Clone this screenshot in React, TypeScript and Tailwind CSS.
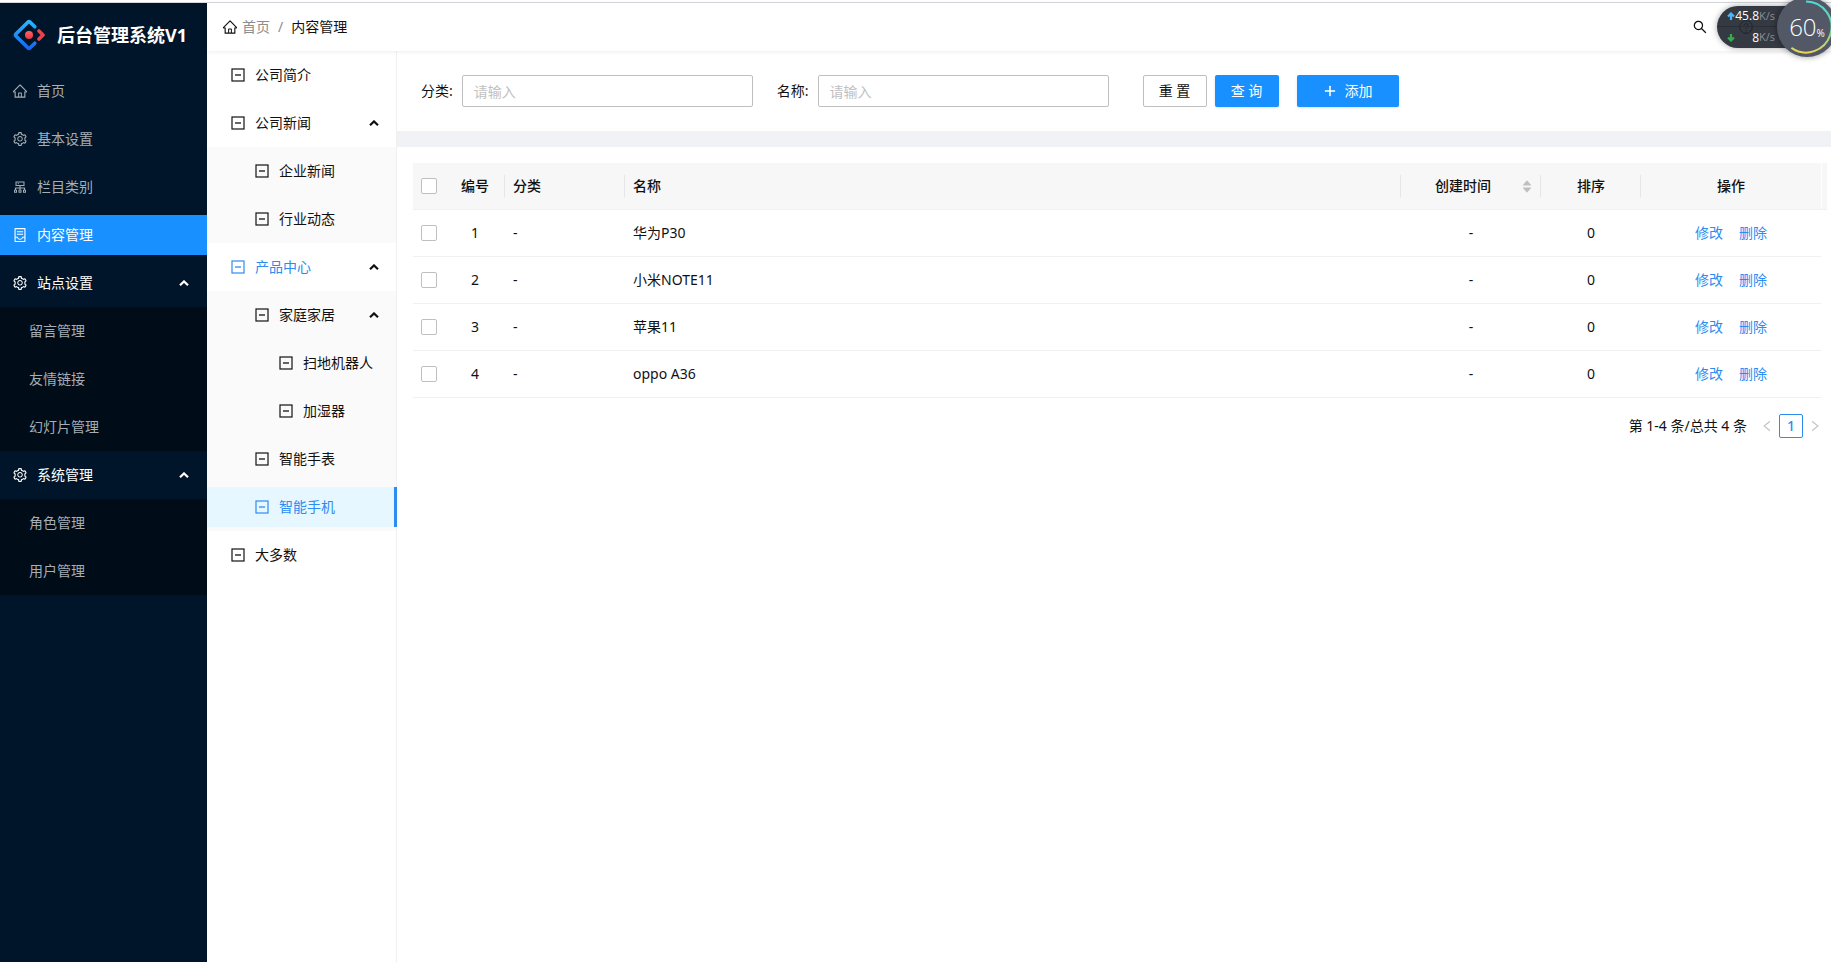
import React from 'react';
import {
  AiOutlineHome,
  AiOutlineSetting,
  AiOutlineCluster,
  AiOutlineContainer,
  AiOutlineSearch,
  AiOutlinePlus,
  AiOutlineLeft,
  AiOutlineRight,
  AiFillCaretUp,
  AiFillCaretDown,
} from 'react-icons/ai';

function Logo() {
  return (
    <svg viewBox="0 0 32 32" className="h-8 w-8 shrink-0" fill="none" aria-hidden="true">
      <defs>
        <linearGradient id="blue" x1="0" y1="0" x2="0" y2="1">
          <stop offset="0" stopColor="#29b6ff" />
          <stop offset="1" stopColor="#1468f0" />
        </linearGradient>
        <linearGradient id="red" x1="0" y1="0" x2="0" y2="1">
          <stop offset="0" stopColor="#fa6469" />
          <stop offset="1" stopColor="#f0323c" />
        </linearGradient>
      </defs>
      <path
        d="M21.8 7.8 L16.9 2.9 Q16 2 15.1 2.9 L2.9 15.1 Q2 16 2.9 16.9 L15.1 29.1 Q16 30 16.9 29.1 L21.8 24.2"
        stroke="url(#blue)"
        strokeWidth="3.6"
        strokeLinecap="round"
        strokeLinejoin="round"
      />
      <path d="M26 12 L30 16 L26 20" stroke="#e8434e" strokeWidth="3.6" strokeLinecap="round" strokeLinejoin="round" />
      <circle cx="16" cy="16" r="4" fill="url(#red)" />
    </svg>
  );
}

function MinusSquare() {
  return (
    <svg viewBox="0 0 14 14" className="h-[14px] w-[14px] shrink-0" fill="none" stroke="currentColor" aria-hidden="true">
      <rect x="1" y="1" width="12" height="12" strokeWidth="1.2" />
      <path d="M4 7H10" strokeWidth="1.3" />
    </svg>
  );
}

function Arrow() {
  return (
    <svg viewBox="0 0 10 6" className="h-[6px] w-[10px] shrink-0" fill="none" stroke="currentColor" strokeWidth="2.2" aria-hidden="true">
      <path d="M1 5.2 L5 1.4 L9 5.2" />
    </svg>
  );
}

type IconType = React.ComponentType<{ className?: string }>;

function SideItem({ icon: Icon, label, active }: { icon: IconType; label: string; active?: boolean }) {
  return (
    <a
      href="#"
      className={`my-1 flex h-10 items-center gap-[9px] pl-3 ${active ? 'bg-[#1890ff] text-white' : 'text-[#a6adb4]'}`}
    >
      <Icon className="h-4 w-4" />
      {label}
    </a>
  );
}

function SideGroup({ label, items }: { label: string; items: string[] }) {
  return (
    <div>
      <button className="flex h-12 w-full items-center gap-[9px] pr-[18px] pl-3 text-white">
        <AiOutlineSetting className="h-4 w-4" />
        <span className="flex-1 text-left">{label}</span>
        <Arrow />
      </button>
      <div className="bg-[#000c17]">
        {items.map((t) => (
          <a key={t} href="#" className="flex h-12 items-center pl-[29px] text-[#a6adb4]">
            {t}
          </a>
        ))}
      </div>
    </div>
  );
}

interface TreeNode {
  label: string;
  children?: TreeNode[];
  selected?: boolean;
  highlighted?: boolean;
}

const tree: TreeNode[] = [
  { label: '公司简介' },
  { label: '公司新闻', children: [{ label: '企业新闻' }, { label: '行业动态' }] },
  {
    label: '产品中心',
    highlighted: true,
    children: [
      { label: '家庭家居', children: [{ label: '扫地机器人' }, { label: '加湿器' }] },
      { label: '智能手表' },
      { label: '智能手机', selected: true },
    ],
  },
  { label: '大多数' },
];

const indents = ['pl-6', 'pl-12', 'pl-[72px]'];

function TreeList({ nodes, level }: { nodes: TreeNode[]; level: number }) {
  return (
    <ul className={`flex flex-col ${level > 0 ? 'bg-[#fafafa]' : ''}`}>
      {nodes.map((n) => (
        <li key={n.label} className="flex flex-col">
          <button
            className={`my-1 flex h-10 items-center gap-[10px] ${indents[level]} ${
              n.selected ? '-mr-px border-r-3 border-[#2d8cf0] bg-[#e6f7ff] pr-[14px]' : 'pr-[17px]'
            } ${n.selected || n.highlighted ? 'text-[#2d8cf0]' : ''}`}
          >
            <MinusSquare />
            <span className="flex-1 text-left whitespace-nowrap">{n.label}</span>
            {n.children && (
              <span className="text-[#111111]">
                <Arrow />
              </span>
            )}
          </button>
          {n.children && <TreeList nodes={n.children} level={level + 1} />}
        </li>
      ))}
    </ul>
  );
}

function Field({ id, label }: { id: string; label: string }) {
  return (
    <div className="flex items-center gap-[9px]">
      <label htmlFor={id} className="whitespace-nowrap">
        {label}:
      </label>
      <input
        id={id}
        placeholder="请输入"
        className="h-8 w-[291px] rounded-[2px] border border-[#bfbfbf] px-[11px] placeholder:text-[#bfbfbf]"
      />
    </div>
  );
}

function Check({ label }: { label: string }) {
  return (
    <input
      type="checkbox"
      aria-label={label}
      className="block h-4 w-4 appearance-none rounded-[2px] border border-[#bfbfbf] bg-white checked:bg-[#1890ff]"
    />
  );
}

function Divider() {
  return <span className="absolute top-3 right-0 h-[22px] w-px bg-[#e6e6e6]" />;
}

const rows = ['华为P30', '小米NOTE11', '苹果11', 'oppo A36'];

const headCell = 'relative border-b border-b-[#f0f0f0] font-medium';
const cell = 'border-b border-[#f0f0f0]';

function ContentTable() {
  return (
    <table className="w-full table-fixed border-separate border-spacing-0">
      <colgroup>
        <col className="w-8" />
        <col className="w-[60px]" />
        <col className="w-[120px]" />
        <col />
        <col className="w-[140px]" />
        <col className="w-[100px]" />
        <col className="w-[180px]" />
        <col className="w-[6px]" />
      </colgroup>
      <thead>
        <tr className="h-[47px] bg-[#f7f7f7]">
          <th className={`${headCell} pl-2`}>
            <Check label="全选" />
          </th>
          <th className={headCell}>
            编号
            <Divider />
          </th>
          <th className={`${headCell} px-2 text-left`}>
            分类
            <Divider />
          </th>
          <th className={`${headCell} px-2 text-left`}>
            名称
            <Divider />
          </th>
          <th className={`${headCell} px-2`}>
            <div className="flex items-center gap-1">
              <span className="flex-1">创建时间</span>
              <span className="flex flex-col text-[#bfbfbf]">
                <AiFillCaretUp className="h-3 w-3" />
                <AiFillCaretDown className="-mt-[5px] h-3 w-3" />
              </span>
            </div>
            <Divider />
          </th>
          <th className={headCell}>
            排序
            <Divider />
          </th>
          <th className={headCell}>操作</th>
          <th className={`${headCell} border-l border-l-[#fdfdfd]`} />
        </tr>
      </thead>
      <tbody>
        {rows.map((name, i) => (
          <tr key={name} className="h-[47px] text-center">
            <td className={`${cell} pl-2`}>
              <Check label={name} />
            </td>
            <td className={cell}>{i + 1}</td>
            <td className={`${cell} px-2 text-left`}>-</td>
            <td className={`${cell} px-2 text-left`}>{name}</td>
            <td className={cell}>-</td>
            <td className={cell}>0</td>
            <td className={cell}>
              <span className="flex justify-center gap-4 text-[#2d8cf0]">
                <a href="#">修改</a>
                <a href="#">删除</a>
              </span>
            </td>
            <td />
          </tr>
        ))}
      </tbody>
    </table>
  );
}

function Pagination() {
  return (
    <div className="mt-4 flex items-center justify-end">
      <span className="mr-2">第 1-4 条/总共 4 条</span>
      <button aria-label="上一页" className="flex h-6 w-6 items-center justify-center text-[#bfbfbf]">
        <AiOutlineLeft className="h-[14px] w-[14px]" />
      </button>
      <button className="flex h-6 w-6 items-center justify-center rounded-[2px] border border-[#2d8cf0] font-medium text-[#2d8cf0]">
        1
      </button>
      <button aria-label="下一页" className="flex h-6 w-6 items-center justify-center text-[#bfbfbf]">
        <AiOutlineRight className="h-[14px] w-[14px]" />
      </button>
    </div>
  );
}

function SpeedWidget() {
  return (
    <div className="absolute top-0 right-0 z-20 h-[66px] w-[122px] overflow-hidden font-['Open_Sans','Noto_Sans',sans-serif]">
      <div className="absolute top-[6px] left-2 h-[42px] w-[90px] rounded-l-full bg-[#343942] shadow-[0_0_6px_rgba(0,0,0,0.35)]">
        <svg viewBox="0 0 14 14" className="absolute top-[14px] left-[22px] h-[14px] w-[14px]" fill="none" stroke="#20242b">
          <circle cx="7" cy="7" r="6.3" />
          <path d="M5 5.6a2 2 0 1 1 2.8 1.8Q7 7.8 7 8.8M7 10v1" />
        </svg>
        <div className="relative flex h-[21px] items-center border-b border-[#2a2e36] pl-[10px] text-xs text-white">
          <svg viewBox="0 0 8 8" className="h-2 w-2 shrink-0" fill="none" stroke="#4eb4f5" strokeWidth="2.2">
            <path d="M4 8V2M1 4.5L4 1.5L7 4.5" />
          </svg>
          <span className="w-6 text-right leading-5">45.8</span>
          <span className="text-[11px] text-[#8b9099]">K/s</span>
        </div>
        <div className="relative flex h-[21px] items-center pl-[10px] text-xs text-white">
          <svg viewBox="0 0 8 8" className="h-2 w-2 shrink-0" fill="none" stroke="#35b04a" strokeWidth="2.2">
            <path d="M4 0V6M1 3.5L4 6.5L7 3.5" />
          </svg>
          <span className="w-6 text-right leading-5">8</span>
          <span className="text-[11px] text-[#8b9099]">K/s</span>
        </div>
      </div>
      <div className="absolute -top-[3px] left-[68px] flex h-[60px] w-[60px] items-center justify-center rounded-full bg-[#525866] text-white shadow-[0_0_6px_rgba(0,0,0,0.4)]">
        <svg viewBox="0 0 60 60" className="absolute inset-0" fill="none" strokeWidth="2">
          <defs>
            <linearGradient id="ring" x1="0" y1="0" x2="0" y2="1">
              <stop offset="0" stopColor="#4fd8d8" />
              <stop offset="0.6" stopColor="#7ed89a" />
              <stop offset="1" stopColor="#e8d558" />
            </linearGradient>
          </defs>
          <path d="M29 4.5 A25.5 25.5 0 1 1 14.4 50.9" stroke="url(#ring)" />
        </svg>
        <span className="text-2xl font-light">60</span>
        <span className="pt-3 text-[10px]">%</span>
      </div>
    </div>
  );
}

export default function App() {
  return (
    <div className="relative flex min-h-screen flex-col bg-white pt-[2px] font-['Noto_Sans','Noto_Sans_CJK_SC',sans-serif] text-sm leading-[22px] text-[#111111]">
      <div className="flex flex-1 border-t border-[#d5d8dd]">
        <aside className="w-[207px] shrink-0 bg-[#001529]">
          <div className="flex h-16 items-center gap-3 pl-[13px]">
            <Logo />
            <h1 className="text-lg font-bold whitespace-nowrap text-white">后台管理系统V1</h1>
          </div>
          <nav className="flex flex-col">
            <SideItem icon={AiOutlineHome} label="首页" />
            <SideItem icon={AiOutlineSetting} label="基本设置" />
            <SideItem icon={AiOutlineCluster} label="栏目类别" />
            <SideItem icon={AiOutlineContainer} label="内容管理" active />
            <SideGroup label="站点设置" items={['留言管理', '友情链接', '幻灯片管理']} />
            <SideGroup label="系统管理" items={['角色管理', '用户管理']} />
          </nav>
        </aside>
        <div className="flex min-w-0 flex-1 flex-col">
          <header className="z-10 flex h-12 items-center pl-[15px] shadow-[0_1px_4px_rgba(0,21,41,0.08)]">
            <AiOutlineHome className="mr-1 h-4 w-4" />
            <a href="#" className="text-[#8c8c8c]">
              首页
            </a>
            <span className="mx-2 text-[#8c8c8c]">/</span>
            <span>内容管理</span>
            <button aria-label="搜索" className="mr-[123px] ml-auto">
              <AiOutlineSearch className="h-4 w-4" />
            </button>
          </header>
          <div className="flex flex-1">
            <nav className="w-[190px] shrink-0 border-r border-[#f0f0f0]">
              <TreeList nodes={tree} level={0} />
            </nav>
            <main className="min-w-0 flex-1">
              <form className="flex items-center gap-6 border-b-16 border-[#f0f2f5] p-6">
                <Field id="category" label="分类" />
                <Field id="name" label="名称" />
                <div className="ml-[10px] flex">
                  <button type="reset" className="h-8 w-16 rounded-[2px] border border-[#bfbfbf]">
                    重 置
                  </button>
                  <button type="submit" className="ml-2 h-8 w-16 rounded-[2px] bg-[#1890ff] text-white shadow-sm">
                    查 询
                  </button>
                  <button
                    type="button"
                    className="ml-[18px] flex h-8 w-[102px] items-center justify-center gap-2 rounded-[2px] bg-[#1890ff] text-white shadow-sm"
                  >
                    <AiOutlinePlus className="h-[14px] w-[14px]" strokeWidth="40" />
                    添加
                  </button>
                </div>
              </form>
              <section className="pt-4 pr-1 pl-4">
                <ContentTable />
                <Pagination />
              </section>
            </main>
          </div>
        </div>
      </div>
      <SpeedWidget />
    </div>
  );
}
